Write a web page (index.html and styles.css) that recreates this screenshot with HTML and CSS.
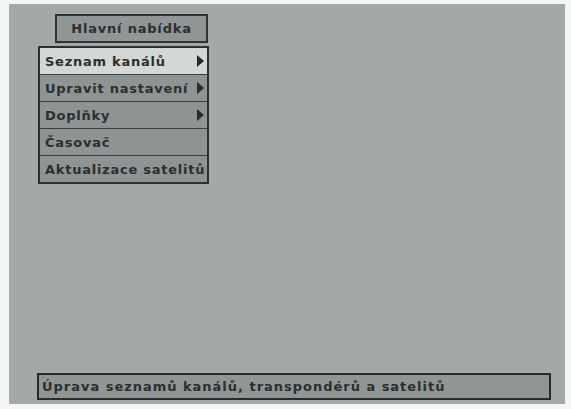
FILE: index.html
```html
<!DOCTYPE html>
<html lang="cs">
<head>
<meta charset="utf-8">
<link rel="stylesheet" href="styles.css">
</head>
<body>
<div class="screen">
  <div class="title">Hlavní nabídka</div>
  <ul class="menu">
    <li class="item active"><span>Seznam kanálů</span><span class="arrow"></span></li>
    <li class="item"><span>Upravit nastavení</span><span class="arrow"></span></li>
    <li class="item"><span>Doplňky</span><span class="arrow"></span></li>
    <li class="item"><span>Časovač</span></li>
    <li class="item"><span>Aktualizace satelitů</span></li>
  </ul>
  <div class="status">Úprava seznamů kanálů, transpondérů a satelitů</div>
</div>
</body>
</html>
```
FILE: styles.css
```css
html, body {
  margin: 0;
  padding: 0;
  background: #f4f5f5;
}
body {
  width: 571px;
  height: 409px;
  overflow: hidden;
  font-family: "DejaVu Sans", Verdana, sans-serif;
  color: #2b302f;
}
.screen {
  margin: 4px 6px 0 9px;
  height: 400px;
  background: #a4a8a7;
  display: flex;
  flex-direction: column;
  align-items: flex-start;
  box-sizing: border-box;
  padding: 10px 0 4px 0;
}
.title {
  margin-left: 46px;
  width: 153px;
  height: 29px;
  box-sizing: border-box;
  border: 2px solid #2f3535;
  background: #8f9695;
  font-size: 13px;
  font-weight: bold;
  letter-spacing: 0.8px;
  display: flex;
  align-items: center;
  justify-content: center;
}
.menu {
  list-style: none;
  margin: 3px 0 0 29px;
  padding: 0;
  width: 171px;
  box-sizing: border-box;
  border: 2px solid #2b3030;
  background: #8e9493;
}
.item {
  height: 27px;
  box-sizing: border-box;
  border-top: 1px solid #3a4040;
  display: flex;
  align-items: center;
  justify-content: space-between;
  padding: 0 3px 0 5px;
  font-size: 13px;
  font-weight: bold;
  letter-spacing: 0.75px;
  white-space: nowrap;
}
.item:first-child {
  border-top: none;
  height: 26px;
}
.item.active {
  background: #d3d7d6;
}
.arrow {
  width: 0;
  height: 0;
  border-top: 6px solid transparent;
  border-bottom: 6px solid transparent;
  border-left: 7px solid #262b2b;
}
.status {
  margin: auto 0 0 28px;
  width: 514px;
  height: 27px;
  box-sizing: border-box;
  border: 2px solid #262b2b;
  background: #8f9695;
  font-size: 13px;
  font-weight: bold;
  letter-spacing: 0.98px;
  display: flex;
  align-items: center;
  padding-left: 3px;
  white-space: nowrap;
}
```
